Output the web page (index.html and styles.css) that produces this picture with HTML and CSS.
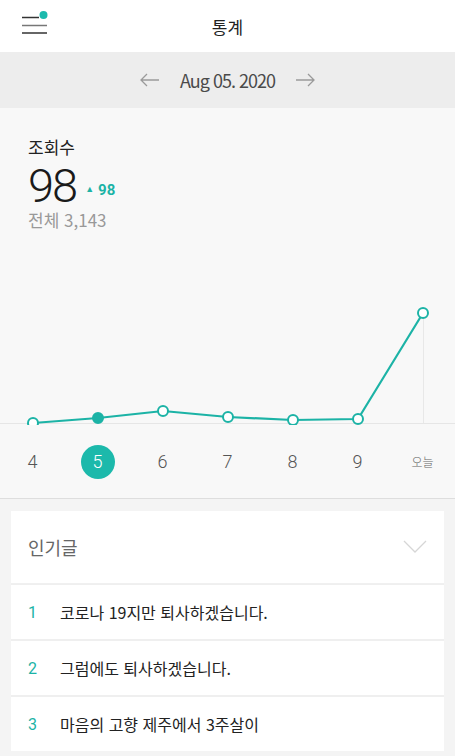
FILE: index.html
```html
<!DOCTYPE html>
<html lang="ko">
<head>
    <meta charset="UTF-8">
    <meta name="viewport" content="width=device-width, initial-scale=1.0">
    <title>통계</title>
    <link rel="stylesheet" href="styles.css">
</head>
<body>

<header class="topbar">
    <button class="menu-btn" aria-label="메뉴">
        <svg width="30" height="24" viewBox="0 0 30 24">
            <line x1="0" y1="7.5" x2="17" y2="7.5" stroke="#333" stroke-width="1.5"/>
            <line x1="0" y1="15.5" x2="25" y2="15.5" stroke="#777" stroke-width="1.5"/>
            <line x1="0" y1="23" x2="25" y2="23" stroke="#333" stroke-width="1.5"/>
            <circle cx="21.5" cy="5" r="4" fill="#1cbaad"/>
        </svg>
    </button>
    <h1 class="title">통계</h1>
</header>

<div class="datebar">
    <svg class="arrow" width="20" height="14" viewBox="0 0 20 14">
        <path d="M19 7H1M7 1L1 7l6 6" fill="none" stroke="#9a9a9a" stroke-width="1.3"/>
    </svg>
    <span class="date">Aug 05. 2020</span>
    <svg class="arrow" width="20" height="14" viewBox="0 0 20 14">
        <path d="M1 7h18M13 1l6 6-6 6" fill="none" stroke="#9a9a9a" stroke-width="1.3"/>
    </svg>
</div>

<section class="stats">
    <div class="summary">
        <div class="label">조회수</div>
        <div class="count-row">
            <span class="count">98</span>
            <span class="delta"><span class="tri">▲</span>98</span>
        </div>
        <div class="total">전체 3,143</div>
    </div>

    <svg class="chart" width="455" height="185" viewBox="0 0 455 185">
        <line x1="0" y1="183.5" x2="455" y2="183.5" stroke="#e6e6e6" stroke-width="1"/>
        <line x1="423.5" y1="73" x2="423.5" y2="183" stroke="#e8e8e8" stroke-width="1"/>
        <polyline points="33,183 98,178 163,171 228,177 293,180 358,179 423,73"
                  fill="none" stroke="#1cb3a6" stroke-width="2.2" stroke-linejoin="round"/>
        <g fill="#fff" stroke="#1cb3a6" stroke-width="2">
            <circle cx="33" cy="183" r="5"/>
            <circle cx="98" cy="178" r="5" fill="#1cb3a6"/>
            <circle cx="163" cy="171" r="5"/>
            <circle cx="228" cy="177" r="5"/>
            <circle cx="293" cy="180" r="5"/>
            <circle cx="358" cy="179" r="5"/>
            <circle cx="423" cy="73" r="5"/>
        </g>
    </svg>

    <div class="days">
        <span class="day">4</span>
        <span class="day active">5</span>
        <span class="day">6</span>
        <span class="day">7</span>
        <span class="day">8</span>
        <span class="day">9</span>
        <span class="day today">오늘</span>
    </div>
</section>

<section class="popular">
    <div class="card">
        <div class="card-head">
            <span>인기글</span>
            <svg width="24" height="14" viewBox="0 0 24 14">
                <path d="M1 1l11 11L23 1" fill="none" stroke="#d6d6d6" stroke-width="1.3"/>
            </svg>
        </div>
        <ol class="post-list">
            <li class="post"><span class="rank">1</span>코로나 19지만 퇴사하겠습니다.</li>
            <li class="post"><span class="rank">2</span>그럼에도 퇴사하겠습니다.</li>
            <li class="post"><span class="rank">3</span>마음의 고향 제주에서 3주살이</li>
        </ol>
    </div>
</section>

</body>
</html>
```

FILE: styles.css
```css
body {
    margin: 0;
    font-family: "Noto Sans CJK KR", "Noto Sans", sans-serif;
    color: #222;
    background: #f4f4f4;
    width: 455px;
    overflow: hidden;
}
.topbar {
    height: 52px;
    background: #fff;
    display: flex;
    align-items: center;
    justify-content: center;
    position: relative;
}
.menu-btn {
    position: absolute;
    left: 22px;
    top: 10px;
    padding: 0;
    border: none;
    background: none;
    line-height: 0;
}
.title {
    margin: 0;
    font-size: 17px;
    font-weight: 400;
    color: #222;
}
.datebar {
    height: 56px;
    background: #ededed;
    display: flex;
    align-items: center;
    justify-content: center;
    gap: 20px;
}
.date {
    font-size: 18px;
    color: #4a4a4a;
    letter-spacing: -1px;
}
.stats {
    background: #f8f8f8;
    border-bottom: 1px solid #dedede;
    padding-top: 27px;
}
.summary {
    padding-left: 28px;
}
.label {
    font-size: 17px;
    line-height: 24px;
    color: #222;
}
.count-row {
    display: flex;
    align-items: center;
    height: 46px;
    margin-top: 4px;
}
.count {
    font-family: Roboto, sans-serif;
    font-weight: 300;
    font-size: 47px;
    line-height: 46px;
    color: #1a1a1a;
    letter-spacing: -2px;
}
.delta {
    margin-left: 9px;
    margin-top: 8px;
    color: #1cb3a6;
    font-family: Roboto, sans-serif;
    font-weight: 700;
    font-size: 15px;
}
.tri {
    font-size: 9px;
    margin-right: 4px;
    vertical-align: 3px;
}
.total {
    font-size: 17px;
    line-height: 22px;
    color: #999;
}
.chart {
    display: block;
    margin-top: 9px;
}
.days {
    display: grid;
    grid-template-columns: repeat(7, 65px);
    height: 73px;
    align-items: center;
}
.day {
    justify-self: center;
    width: 34px;
    height: 34px;
    border-radius: 50%;
    display: flex;
    align-items: center;
    justify-content: center;
    font-family: Roboto, sans-serif;
    font-weight: 300;
    font-size: 18px;
    color: #555;
}
.day.active {
    background: #1cb9ab;
    color: #fff;
}
.day.today {
    font-family: "Noto Sans CJK KR", sans-serif;
    font-size: 12px;
    color: #666;
}
.popular {
    padding: 12px 11px 0;
}
.card {
    background: #fff;
}
.card-head {
    height: 72px;
    display: flex;
    align-items: center;
    justify-content: space-between;
    padding: 0 17px 0 17px;
    font-size: 18px;
    color: #666;
    border-bottom: 1px solid #f0f0f0;
}
.post-list {
    list-style: none;
    margin: 0;
    padding: 0;
    background: #efefef;
    display: flex;
    flex-direction: column;
    gap: 2px;
    padding-top: 1px;
}
.post {
    background: #fff;
    height: 54px;
    display: flex;
    align-items: center;
    padding-left: 17px;
    font-size: 16px;
    color: #222;
}
.rank {
    width: 32px;
    color: #1cb3a6;
    font-family: Roboto, sans-serif;
    font-size: 16px;
}
```
